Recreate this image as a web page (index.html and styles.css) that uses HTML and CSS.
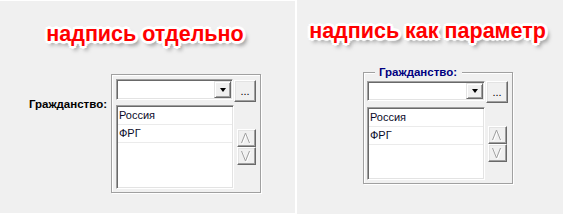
FILE: index.html
```html
<!DOCTYPE html>
<html lang="ru">
<head>
<meta charset="utf-8">
<title>Гражданство</title>
<link rel="stylesheet" href="styles.css">
</head>
<body>
<div class="screen">
  <section class="panel panel-left">
    <h1 class="title">надпись отдельно</h1>
    <div class="row">
      <span class="label">Гражданство:</span>
      <div class="group">
        <div class="picker">
          <div class="picker-top">
            <div class="combo"><span class="combo-btn"><span class="tri"></span></span></div>
            <button class="dots">...</button>
          </div>
          <div class="picker-bottom">
            <div class="list">
              <div class="item">Россия</div>
              <div class="item">ФРГ</div>
            </div>
            <div class="spin">
              <span class="spin-btn"><svg width="11" height="12" viewBox="0 0 11 12"><polyline points="1.5,12 5.5,2 9.5,12" fill="none" stroke="#fff"/><polyline points="0.5,11 4.5,1 8.5,11" fill="none" stroke="#a0a0a0"/></svg></span>
              <span class="spin-btn"><svg width="11" height="12" viewBox="0 0 11 12"><polyline points="1.5,2 5.5,12 9.5,2" fill="none" stroke="#fff"/><polyline points="0.5,1 4.5,11 8.5,1" fill="none" stroke="#a0a0a0"/></svg></span>
            </div>
          </div>
        </div>
      </div>
    </div>
  </section>
  <section class="panel panel-right">
    <h1 class="title">надпись как параметр</h1>
    <fieldset class="group group-fs">
      <legend>Гражданство:</legend>
      <div class="picker picker-compact">
        <div class="picker-top">
          <div class="combo"><span class="combo-btn"><span class="tri"></span></span></div>
          <button class="dots">...</button>
        </div>
        <div class="picker-bottom">
          <div class="list">
            <div class="item">Россия</div>
            <div class="item">ФРГ</div>
          </div>
          <div class="spin">
            <span class="spin-btn"><svg width="11" height="12" viewBox="0 0 11 12"><polyline points="1.5,12 5.5,2 9.5,12" fill="none" stroke="#fff"/><polyline points="0.5,11 4.5,1 8.5,11" fill="none" stroke="#a0a0a0"/></svg></span>
            <span class="spin-btn"><svg width="11" height="12" viewBox="0 0 11 12"><polyline points="1.5,2 5.5,12 9.5,2" fill="none" stroke="#fff"/><polyline points="0.5,1 4.5,11 8.5,1" fill="none" stroke="#a0a0a0"/></svg></span>
          </div>
        </div>
      </div>
    </fieldset>
  </section>
</div>
</body>
</html>
```
FILE: styles.css
```css
* { box-sizing: border-box; }
html, body { margin: 0; padding: 0; }
body {
  width: 563px;
  height: 214px;
  overflow: hidden;
  background: #fff;
  font-family: "Liberation Sans", Arial, sans-serif;
  font-size: 11px;
  color: #000;
}
.screen {
  display: flex;
  gap: 2px;
  height: 214px;
  background: #fff;
}
.panel {
  background: #f0f0f0;
  height: 214px;
}
.panel-left {
  width: 295px;
  border-top: 1px solid #fff;
  border-bottom: 1px solid #fff;
}
.panel-right {
  flex: 1;
}
.title {
  margin: 0;
  padding-right: 5px;
  font-size: 21.5px;
  font-weight: bold;
  line-height: 26px;
  color: #f00;
  text-align: center;
  white-space: nowrap;
  text-shadow:
    -1px -1px 0 #fff, 1px -1px 0 #fff, -1px 1px 0 #fff, 1px 1px 0 #fff,
    -2px 0 0 #fff, 2px 0 0 #fff, 0 -2px 0 #fff, 0 2px 0 #fff,
    -2px -2px 0 #fff, 2px -2px 0 #fff, -2px 2px 0 #fff, 2px 2px 0 #fff,
    -3px 0 1px #fff, 3px 0 1px #fff, 0 3px 1px #fff, 0 -3px 1px #fff,
    3px 4px 4px rgba(0, 0, 0, 0.55);
}
.panel-left .title { padding-top: 20px; }
.panel-right .title { padding-top: 18px; }

.row {
  display: flex;
  align-items: flex-start;
  gap: 4px;
  margin-top: 27px;
}
.label {
  width: 107px;
  margin-top: 24px;
  text-align: right;
  font-size: 11.5px;
  font-weight: bold;
  line-height: 13px;
  white-space: nowrap;
}

.group {
  width: 150px;
  border: 1px solid #a0a0a0;
  box-shadow: 1px 1px 0 #fff, inset 1px 1px 0 #fff;
  padding: 4px 3px 3px 4px;
}
.group-fs {
  margin: 22px 0 0 66px;
  padding: 2px 3px 3px 3px;
  min-width: 0;
}
.group-fs legend {
  margin-left: 8px;
  padding: 0 5px 0 4px;
  background: #f0f0f0;
  color: #000080;
  font-size: 11.5px;
  font-weight: bold;
  line-height: 13px;
}

.picker-top {
  display: flex;
  align-items: flex-start;
  gap: 1px;
}
.combo {
  width: 117px;
  height: 21px;
  background: #fff;
  border: 1px solid;
  border-color: #a0a0a0 #fff #fff #a0a0a0;
  box-shadow: inset 1px 1px 0 #696969, inset -1px -1px 0 #e3e3e3;
  padding: 1px;
  display: flex;
  justify-content: flex-end;
}
.combo-btn {
  width: 17px;
  height: 100%;
  background: #f0f0f0;
  border: 1px solid;
  border-color: #e3e3e3 #696969 #696969 #e3e3e3;
  box-shadow: inset 1px 1px 0 #fff, inset -1px -1px 0 #a0a0a0;
  display: flex;
  align-items: center;
  justify-content: center;
}
.tri {
  width: 0;
  height: 0;
  border-left: 3.5px solid transparent;
  border-right: 3.5px solid transparent;
  border-top: 4px solid #000;
}
.dots {
  width: 22px;
  height: 22px;
  margin: 1px 0 0 0;
  padding: 0;
  background: #f0f0f0;
  border: 1px solid;
  border-color: #fff #696969 #696969 #fff;
  box-shadow: inset -1px -1px 0 #a0a0a0, inset 1px 1px 0 #e3e3e3;
  font-family: "Liberation Sans", Arial, sans-serif;
  font-size: 11px;
  line-height: 14px;
  color: #000;
  display: flex;
  align-items: center;
  justify-content: center;
}

.picker-bottom {
  display: flex;
  align-items: center;
  gap: 3px;
  margin-top: 3px;
}
.list {
  width: 118px;
  height: 84px;
  background: #fff;
  border: 1px solid;
  border-color: #a0a0a0 #fff #fff #a0a0a0;
  box-shadow: inset 1px 1px 0 #696969, inset -1px -1px 0 #e3e3e3;
  padding: 1px;
}
.item {
  height: 18px;
  line-height: 17px;
  padding-left: 1px;
  border-bottom: 1px solid #ebebeb;
  color: #0a0a28;
}
.spin {
  display: flex;
  flex-direction: column;
}
.spin-btn {
  width: 19px;
  height: 18px;
  background: #f0f0f0;
  border: 1px solid;
  border-color: #fff #696969 #696969 #fff;
  box-shadow: inset -1px -1px 0 #a0a0a0, inset 1px 1px 0 #e3e3e3;
  display: flex;
  align-items: center;
  justify-content: center;
}

.picker-compact .combo { width: 118px; height: 20px; }
.picker-compact .dots { margin-top: 0; }
.picker-compact .picker-bottom { margin-top: 4px; }
.picker-compact .list { height: 73px; }
```
